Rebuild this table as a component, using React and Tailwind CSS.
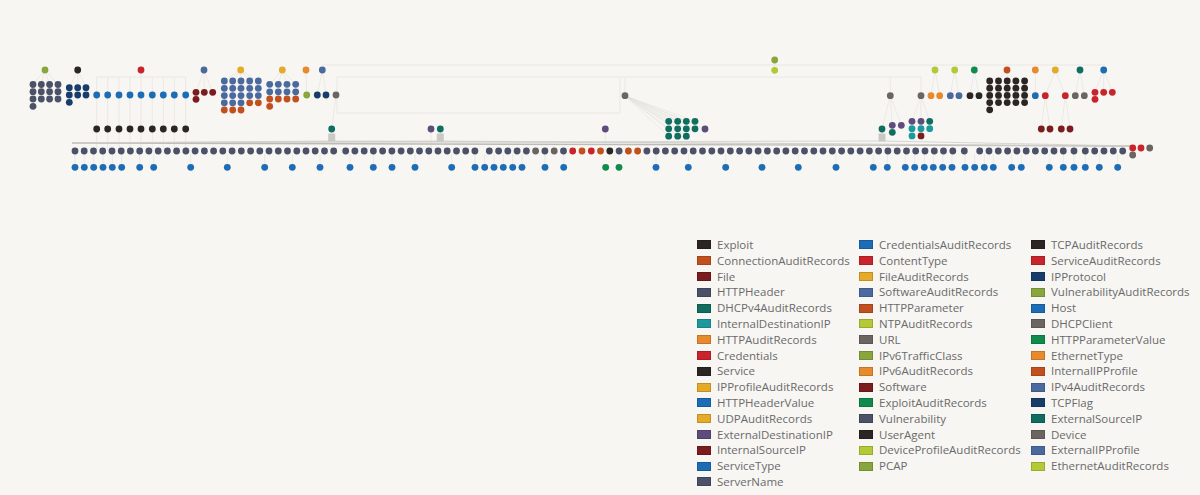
import React from "react";

const C = {
  slate: "#4b5167",
  navy: "#193d6b",
  blue: "#1c6db5",
  steel: "#4a6a9f",
  black: "#2b2624",
  red: "#c9242b",
  dred: "#7b1c1e",
  rust: "#c1501e",
  orange: "#e68a2b",
  yellow: "#e4aa28",
  olive: "#88a63c",
  lime: "#b3c935",
  teal: "#0f6e5f",
  cyan: "#1a9a9c",
  green: "#0f8c4b",
  purple: "#5f4c7f",
  grey: "#6b6561",
};

const seq = (x0, step, n) =>
  Array.from({ length: n }, (_, i) => +(x0 + i * step).toFixed(1));
const row = (xs, y, c) => xs.map((x) => [x, y, c]);
const block = (xs, ys, counts, color) =>
  ys.flatMap((y, r) =>
    xs
      .slice(0, counts[r])
      .map((x, i) => [x, y, typeof color === "function" ? color(r, i) : color])
  );

// grey row (y 151) with a few coloured members
const mid = seq(489.3, 9.27, 51);
const midColor = { 5: C.grey, 7: C.grey, 9: C.red, 10: C.rust, 11: C.red, 12: C.rust, 13: C.black, 15: C.rust, 16: C.rust };
const greyRow = [
  ...row(seq(75, 9.24, 29), 151, C.slate),
  ...row(seq(345.7, 9.23, 15), 151, C.slate),
  ...mid.map((x, i) => [x, 151, midColor[i] || C.slate]),
  [964.3, 151, C.slate],
  ...row(seq(979.7, 9.29, 10), 151, C.slate),
  ...row([1074, 1085.3, 1094.7, 1104, 1113.3, 1122.7], 151, C.slate),
];

const blueXs = [
  75, 84.3, 93.7, 103, 112.3, 121.7, 139.7, 153.7, 190.7, 227.3, 264.7, 292.3, 320, 350, 373.3, 392,
  415, 451.7, 475, 484.7, 494, 503.3, 512.7, 522, 545, 563.7, 656, 688.3, 725.7, 762, 798.3,
  836, 873.3, 887.3, 905.3, 914.7, 924.3, 933.3, 942.7, 952, 965, 974.7, 984.3, 993.3, 1011.7,
  1021.3, 1049.3, 1063.3, 1074, 1085.3, 1099.3, 1117.7,
];
const blueRow = [...row(blueXs, 167.3, C.blue), [605.7, 167.3, C.green], [619, 167.3, C.green]];

const treeXs = [96.7, 107.7, 119, 130, 141, 152.3, 163.3, 174.3, 185.7];

const nodes = [
  // top row
  [45, 70, C.olive], [77.7, 70, C.black], [141, 70, C.red], [204, 70, C.steel],
  [240.7, 70, C.yellow], [282.3, 70, C.yellow], [306, 70, C.orange], [322.3, 70, C.steel],
  [774.7, 60, C.olive], [774.7, 70.3, C.lime],
  [935, 70, C.lime], [954.7, 70, C.lime], [974.3, 70, C.green], [1007, 70, C.rust],
  [1035.3, 70, C.orange], [1055.3, 70, C.yellow], [1080, 70, C.teal], [1103.7, 70, C.blue],
  // left clusters
  ...block([33, 41.3, 49.6, 58], [84.5, 91.7, 99, 106.3], [4, 4, 4, 1], C.slate),
  ...block([69.3, 77.7, 86], [87.7, 95, 102.3], [3, 3, 1], C.navy),
  ...row(treeXs, 95, C.blue),
  ...row(treeXs, 129, C.black),
  [196, 92.3, C.dred], [204.3, 92.3, C.dred], [212.7, 92.3, C.dred], [196, 99.3, C.dred],
  ...block([224.3, 232.7, 241, 249.7, 258.3], [81, 88.3, 95.6, 102.8, 110], [5, 5, 5, 5, 3],
    (r, i) => (r === 4 || (r === 3 && i > 2) ? C.rust : C.steel)),
  ...block([269.7, 278.3, 287, 295.7], [84.3, 91.8, 99, 106.3], [4, 4, 4, 1],
    (r) => (r > 1 ? C.rust : C.steel)),
  [306.7, 95, C.olive], [317.3, 95, C.navy], [326, 95, C.navy], [336, 95, C.grey],
  [331.7, 129, C.teal],
  [431, 129, C.purple], [440.3, 129, C.teal],
  // middle
  [625, 95.7, C.grey], [605.3, 129, C.purple],
  ...block([668.7, 677.7, 686.3, 695], [121.3, 128.8, 136.2], [4, 4, 3], C.teal),
  [705, 129, C.purple],
  // right clusters
  [890.3, 95.7, C.grey], [921, 95.7, C.grey],
  [931, 95.7, C.orange], [939.7, 95.7, C.orange], [950.3, 95.7, C.steel], [959, 95.7, C.steel],
  [970, 95.7, C.black], [979, 95.7, C.black],
  ...block([989.7, 998.5, 1007.2, 1015.9, 1024.6], [81, 88.2, 95.4, 102.6, 109.8], [5, 5, 5, 5, 1], C.black),
  [1035.3, 95.7, C.blue], [1045.3, 95.7, C.red], [1065.3, 95.7, C.red],
  [1075.3, 95.7, C.grey], [1084.3, 95.7, C.grey],
  [1095, 92.3, C.red], [1103.7, 92.3, C.red], [1112.3, 92.3, C.red], [1095, 99.3, C.red],
  [1041.3, 129, C.dred], [1050, 129, C.dred], [1061.3, 129, C.dred], [1070, 129, C.dred],
  [882, 129, C.teal], [892.3, 125.3, C.purple], [901.3, 125.3, C.purple], [892.3, 132.3, C.teal],
  [912, 121.3, C.purple], [921, 121.3, C.purple], [929.7, 121.3, C.teal],
  [912, 128.7, C.cyan], [921, 128.7, C.cyan], [929.7, 128.7, C.cyan],
  [912, 135.9, C.cyan], [921, 135.9, C.dred],
  // right tail
  [1132.7, 148, C.red], [1141, 148, C.red], [1149.7, 148, C.grey], [1132.7, 155, C.grey],
  ...greyRow,
  ...blueRow,
];

const fan = (px, py, targets) => targets.map(([x, y]) => [px, py, x, y]);

const edges = [
  // top buses
  [333, 65, 1105, 65],
  [337, 77, 921, 77],
  [337, 77, 337, 113],
  [337, 113, 620, 113],
  [620, 113, 620, 78],
  [625, 78, 625, 95],
  [890.3, 77, 890.3, 95],
  [921, 77, 921, 95],
  [322, 65, 333, 65],
  // red node tree
  [141, 70, 141, 77],
  [96.7, 77, 185.7, 77],
  ...treeXs.flatMap((x) => [[x, 77, x, 95], [x, 95, x, 129], [x, 129, x, 151]]),
  // parents to clusters
  ...fan(45, 70, [[33, 84.5], [41.3, 84.5], [49.6, 84.5], [58, 84.5]]),
  ...fan(77.7, 70, [[69.3, 87.7], [77.7, 87.7], [86, 87.7]]),
  ...fan(204, 70, [[196, 92.3], [204.3, 92.3], [212.7, 92.3]]),
  ...fan(240.7, 70, [[224.3, 81], [232.7, 81], [241, 81], [249.7, 81], [258.3, 81]]),
  ...fan(282.3, 70, [[269.7, 84.3], [278.3, 84.3], [287, 84.3], [295.7, 84.3]]),
  [306, 70, 306.7, 95],
  ...fan(322.3, 70, [[317.3, 95], [326, 95]]),
  [336, 95, 331.7, 129],
  [331.7, 129, 331.7, 137],
  [440.3, 129, 440.3, 137],
  [431, 129, 431, 151],
  [605.3, 129, 605.3, 151],
  ...fan(625, 95.7, [
    [668.7, 121.3], [677.7, 121.3], [686.3, 121.3], [695, 121.3],
    [668.7, 128.8], [677.7, 128.8], [686.3, 128.8], [695, 128.8],
    [668.7, 136.2], [677.7, 136.2], [686.3, 136.2], [705, 129],
  ]),
  ...fan(890.3, 95.7, [[892.3, 125.3], [901.3, 125.3], [882, 129]]),
  ...fan(921, 95.7, [[912, 121.3], [921, 121.3], [929.7, 121.3]]),
  ...fan(935, 70, [[931, 95.7], [939.7, 95.7]]),
  ...fan(954.7, 70, [[950.3, 95.7], [959, 95.7]]),
  ...fan(974.3, 70, [[970, 95.7], [979, 95.7]]),
  ...fan(1007, 70, [[998.5, 81], [1007.2, 81], [1015.9, 81]]),
  [1035.3, 70, 1035.3, 95.7],
  ...fan(1055.3, 70, [[1045.3, 95.7], [1065.3, 95.7]]),
  ...fan(1080, 70, [[1075.3, 95.7], [1084.3, 95.7]]),
  ...fan(1103.7, 70, [[1095, 92.3], [1103.7, 92.3], [1112.3, 92.3]]),
  ...fan(1045.3, 95.7, [[1041.3, 129], [1050, 129]]),
  ...fan(1065.3, 95.7, [[1061.3, 129], [1070, 129]]),
  [882, 129, 882, 137],
  [774.7, 60, 774.7, 70],
  // stubs between grey and blue rows
  ...blueXs.map((x) => [x, 154, x, 164]),
];

const bundles = [331.7, 440.3, 882].flatMap((x) => [
  [x, 141, 72, 143],
  [x, 141, 1133, 146],
]);

const Graph = () => (
  <svg width="1200" height="200" viewBox="0 0 1200 200" className="block">
    <g stroke="#e3e1dd" strokeWidth="0.6" fill="none">
      {edges.map(([x1, y1, x2, y2], i) => (
        <line key={i} x1={x1} y1={y1} x2={x2} y2={y2} />
      ))}
    </g>
    <g stroke="#cfcdc9" strokeWidth="0.8" fill="none">
      <line x1="72" y1="143" x2="1133" y2="146" strokeWidth="1.3" stroke="#bdbbb7" />
      {bundles.map(([x1, y1, x2, y2], i) => (
        <line key={i} x1={x1} y1={y1} x2={x2} y2={y2} />
      ))}
    </g>
    {[331.7, 440.3, 882].map((x) => (
      <rect key={x} x={x - 3.5} y="133.5" width="7" height="8" fill="#cbc9c5" />
    ))}
    {nodes.map(([x, y, c], i) => (
      <circle key={i} cx={x} cy={y} r="3.4" fill={c} />
    ))}
  </svg>
);

const legend = [
  [
    ["Exploit", "bg-[#2b2624]"],
    ["ConnectionAuditRecords", "bg-[#c1501e]"],
    ["File", "bg-[#7b1c1e]"],
    ["HTTPHeader", "bg-[#4b5167]"],
    ["DHCPv4AuditRecords", "bg-[#0f6e5f]"],
    ["InternalDestinationIP", "bg-[#1a9a9c]"],
    ["HTTPAuditRecords", "bg-[#e68a2b]"],
    ["Credentials", "bg-[#c9242b]"],
    ["Service", "bg-[#2b2624]"],
    ["IPProfileAuditRecords", "bg-[#e4aa28]"],
    ["HTTPHeaderValue", "bg-[#1c6db5]"],
    ["UDPAuditRecords", "bg-[#e4aa28]"],
    ["ExternalDestinationIP", "bg-[#5f4c7f]"],
    ["InternalSourceIP", "bg-[#7b1c1e]"],
    ["ServiceType", "bg-[#1c6db5]"],
    ["ServerName", "bg-[#4b5167]"],
  ],
  [
    ["CredentialsAuditRecords", "bg-[#1c6db5]"],
    ["ContentType", "bg-[#c9242b]"],
    ["FileAuditRecords", "bg-[#e4aa28]"],
    ["SoftwareAuditRecords", "bg-[#4a6a9f]"],
    ["HTTPParameter", "bg-[#c1501e]"],
    ["NTPAuditRecords", "bg-[#b3c935]"],
    ["URL", "bg-[#6b6561]"],
    ["IPv6TrafficClass", "bg-[#88a63c]"],
    ["IPv6AuditRecords", "bg-[#e68a2b]"],
    ["Software", "bg-[#7b1c1e]"],
    ["ExploitAuditRecords", "bg-[#0f8c4b]"],
    ["Vulnerability", "bg-[#4b5167]"],
    ["UserAgent", "bg-[#2b2624]"],
    ["DeviceProfileAuditRecords", "bg-[#b3c935]"],
    ["PCAP", "bg-[#88a63c]"],
  ],
  [
    ["TCPAuditRecords", "bg-[#2b2624]"],
    ["ServiceAuditRecords", "bg-[#c9242b]"],
    ["IPProtocol", "bg-[#193d6b]"],
    ["VulnerabilityAuditRecords", "bg-[#88a63c]"],
    ["Host", "bg-[#1c6db5]"],
    ["DHCPClient", "bg-[#6b6561]"],
    ["HTTPParameterValue", "bg-[#0f8c4b]"],
    ["EthernetType", "bg-[#e68a2b]"],
    ["InternalIPProfile", "bg-[#c1501e]"],
    ["IPv4AuditRecords", "bg-[#4a6a9f]"],
    ["TCPFlag", "bg-[#193d6b]"],
    ["ExternalSourceIP", "bg-[#0f6e5f]"],
    ["Device", "bg-[#6b6561]"],
    ["ExternalIPProfile", "bg-[#4a6a9f]"],
    ["EthernetAuditRecords", "bg-[#b3c935]"],
  ],
];

const colWidths = ["w-[162px]", "w-[172px]", ""];

const Legend = () => (
  <div className="flex pl-[697px] pt-[37px] font-['Open_Sans',sans-serif] text-[11.5px] leading-[15.8px] text-[#6a6a6a]">
    {legend.map((col, ci) => (
      <ul key={ci} className={colWidths[ci]}>
        {col.map(([name, bg]) => (
          <li key={name} className="flex h-[15.8px] items-center gap-[6px] whitespace-nowrap">
            <span className={`h-[9px] w-[14px] shrink-0 border border-black/15 ${bg}`} />
            <span>{name}</span>
          </li>
        ))}
      </ul>
    ))}
  </div>
);

export default function App() {
  return (
    <div className="h-[495px] w-[1200px] overflow-hidden bg-[#f7f6f3]">
      <Graph />
      <Legend />
    </div>
  );
}
